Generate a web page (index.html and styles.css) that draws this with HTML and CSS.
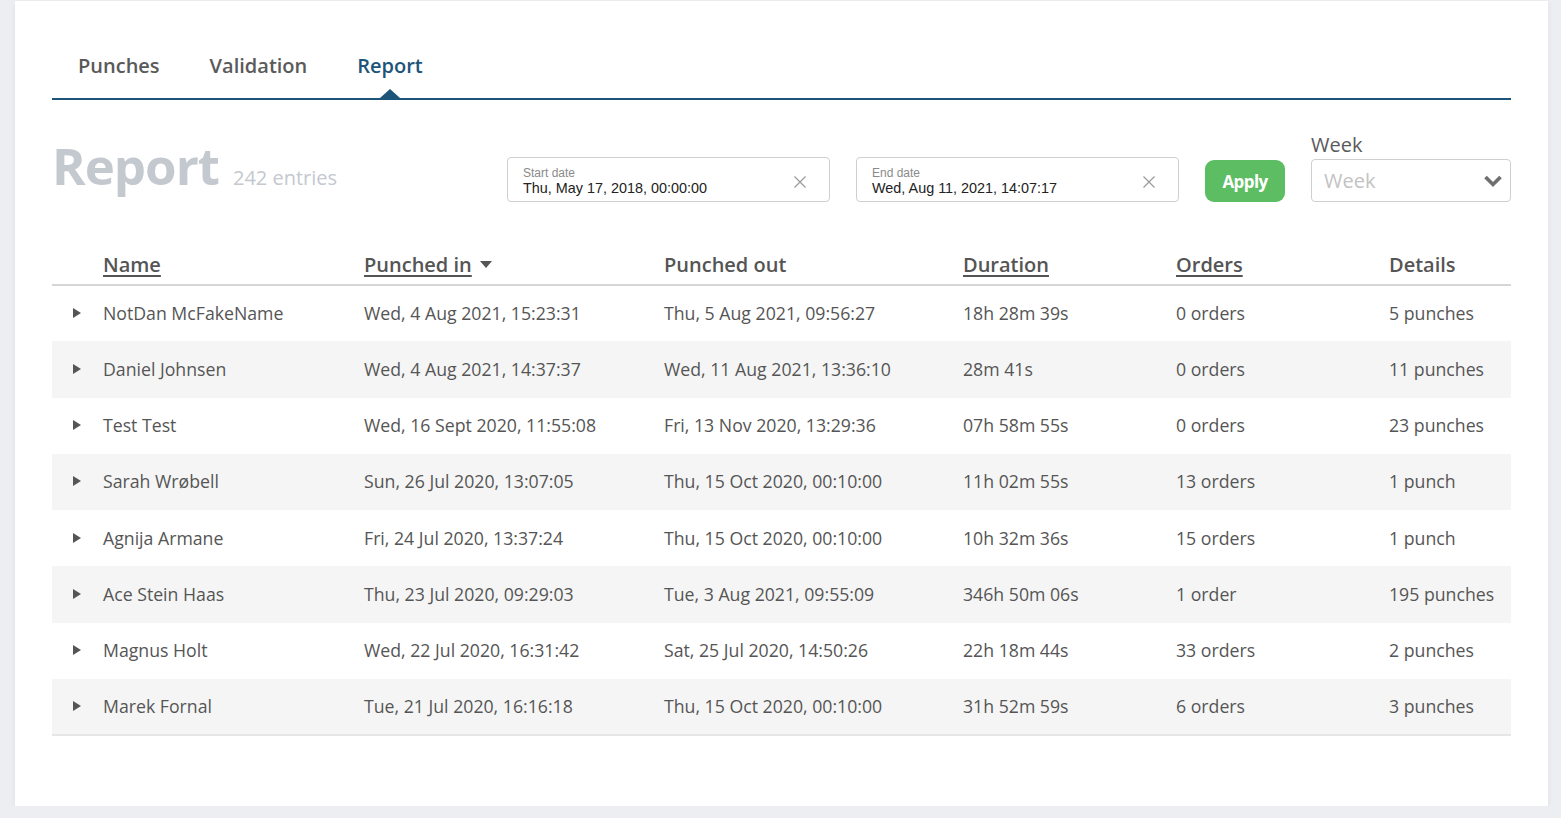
FILE: index.html
```html
<!DOCTYPE html>
<html lang="en">
<head>
<meta charset="utf-8">
<title>Report</title>
<link rel="stylesheet" href="styles.css">
</head>
<body>
<div class="card">
  <nav class="tabs">
    <a class="tab">Punches</a>
    <a class="tab">Validation</a>
    <a class="tab active">Report</a>
  </nav>

  <div class="toolbar">
    <div class="title">
      <h1>Report</h1>
      <span class="count">242 entries</span>
    </div>
    <div class="controls">
      <div class="date-input">
        <div class="date-text">
          <span class="date-label">Start date</span>
          <span class="date-value">Thu, May 17, 2018, 00:00:00</span>
        </div>
        <svg class="clear" width="14" height="14" viewBox="0 0 14 14"><path d="M1.5 1.5L12.5 12.5M12.5 1.5L1.5 12.5" stroke="#9a9a9a" stroke-width="1.2" fill="none"/></svg>
      </div>
      <div class="date-input">
        <div class="date-text">
          <span class="date-label">End date</span>
          <span class="date-value">Wed, Aug 11, 2021, 14:07:17</span>
        </div>
        <svg class="clear" width="14" height="14" viewBox="0 0 14 14"><path d="M1.5 1.5L12.5 12.5M12.5 1.5L1.5 12.5" stroke="#9a9a9a" stroke-width="1.2" fill="none"/></svg>
      </div>
      <button class="apply">Apply</button>
      <div class="week">
        <label class="week-label">Week</label>
        <div class="select">
          <span class="placeholder">Week</span>
          <svg width="20" height="14" viewBox="0 0 20 14"><path d="M2.5 3L10 10.5L17.5 3" stroke="#6f6f6f" stroke-width="3.6" fill="none"/></svg>
        </div>
      </div>
    </div>
  </div>

  <table class="report">
    <colgroup>
      <col class="c-arrow"><col class="c-name"><col class="c-in"><col class="c-out"><col class="c-dur"><col class="c-ord"><col class="c-det">
    </colgroup>
    <thead>
      <tr>
        <th></th>
        <th><span class="sortable">Name</span></th>
        <th><span class="sortable">Punched in</span><span class="sort-caret"></span></th>
        <th>Punched out</th>
        <th><span class="sortable">Duration</span></th>
        <th><span class="sortable">Orders</span></th>
        <th>Details</th>
      </tr>
    </thead>
    <tbody>
      <tr><td><span class="row-caret"></span></td><td>NotDan McFakeName</td><td>Wed, 4 Aug 2021, 15:23:31</td><td>Thu, 5 Aug 2021, 09:56:27</td><td>18h 28m 39s</td><td>0 orders</td><td>5 punches</td></tr>
      <tr><td><span class="row-caret"></span></td><td>Daniel Johnsen</td><td>Wed, 4 Aug 2021, 14:37:37</td><td>Wed, 11 Aug 2021, 13:36:10</td><td>28m 41s</td><td>0 orders</td><td>11 punches</td></tr>
      <tr><td><span class="row-caret"></span></td><td>Test Test</td><td>Wed, 16 Sept 2020, 11:55:08</td><td>Fri, 13 Nov 2020, 13:29:36</td><td>07h 58m 55s</td><td>0 orders</td><td>23 punches</td></tr>
      <tr><td><span class="row-caret"></span></td><td>Sarah Wrøbell</td><td>Sun, 26 Jul 2020, 13:07:05</td><td>Thu, 15 Oct 2020, 00:10:00</td><td>11h 02m 55s</td><td>13 orders</td><td>1 punch</td></tr>
      <tr><td><span class="row-caret"></span></td><td>Agnija Armane</td><td>Fri, 24 Jul 2020, 13:37:24</td><td>Thu, 15 Oct 2020, 00:10:00</td><td>10h 32m 36s</td><td>15 orders</td><td>1 punch</td></tr>
      <tr><td><span class="row-caret"></span></td><td>Ace Stein Haas</td><td>Thu, 23 Jul 2020, 09:29:03</td><td>Tue, 3 Aug 2021, 09:55:09</td><td>346h 50m 06s</td><td>1 order</td><td>195 punches</td></tr>
      <tr><td><span class="row-caret"></span></td><td>Magnus Holt</td><td>Wed, 22 Jul 2020, 16:31:42</td><td>Sat, 25 Jul 2020, 14:50:26</td><td>22h 18m 44s</td><td>33 orders</td><td>2 punches</td></tr>
      <tr><td><span class="row-caret"></span></td><td>Marek Fornal</td><td>Tue, 21 Jul 2020, 16:16:18</td><td>Thu, 15 Oct 2020, 00:10:00</td><td>31h 52m 59s</td><td>6 orders</td><td>3 punches</td></tr>
    </tbody>
  </table>
</div>
</body>
</html>
```

FILE: styles.css
```css
* { box-sizing: border-box; }

html, body {
  margin: 0;
  padding: 0;
  background: #eceef2;
  font-family: "Open Sans", "Noto Sans", sans-serif;
  color: #555;
}

.card {
  width: 1533px;
  height: 805px;
  margin: 1px 0 0 15px;
  background: #fff;
  padding: 0 37px;
  box-shadow: 0 2px 6px rgba(0, 0, 0, 0.06);
}

/* Tabs */
.tabs {
  display: flex;
  padding-top: 51px;
  padding-left: 1px;
  border-bottom: 2px solid #1d5479;
}

.tab {
  position: relative;
  padding: 0 25px 18px;
  font-size: 20px;
  font-weight: 600;
  line-height: 28px;
  color: #5a5a5a;
}

.tab.active {
  color: #1d5479;
}

.tab.active::after {
  content: "";
  position: absolute;
  left: 50%;
  bottom: 0;
  margin-left: -10px;
  border-left: 10px solid transparent;
  border-right: 10px solid transparent;
  border-bottom: 9px solid #1d5479;
}

/* Toolbar */
.toolbar {
  display: flex;
  align-items: flex-end;
  justify-content: space-between;
  margin-top: 33px;
}

.title {
  display: flex;
  align-items: baseline;
  gap: 14px;
  margin-bottom: 11px;
}

.title h1 {
  margin: 0;
  font-size: 51px;
  letter-spacing: -1px;
  line-height: 1;
  font-weight: 700;
  color: #c4c8cf;
}

.count {
  font-size: 20px;
  color: #c4c8cf;
}

.controls {
  display: flex;
  align-items: flex-end;
  gap: 26px;
}

.date-input {
  width: 323px;
  height: 45px;
  border: 1px solid #cfcfcf;
  border-radius: 4px;
  display: flex;
  align-items: center;
  justify-content: space-between;
  padding: 0 22px 0 15px;
  font-family: "Liberation Sans", Arial, sans-serif;
}

.date-text {
  display: flex;
  flex-direction: column;
  padding-top: 3px;
}

.date-label {
  font-size: 12px;
  line-height: 13px;
  color: #8a8a8a;
}

.date-value {
  font-size: 14.4px;
  line-height: 16px;
  color: #222;
}

.clear {
  display: block;
  margin-top: 4px;
}

.apply {
  width: 80px;
  height: 42px;
  border: none;
  border-radius: 9px;
  background: #5cbd62;
  color: #fff;
  font-family: "Open Sans", sans-serif;
  font-weight: 700;
  font-size: 17px;
  letter-spacing: -0.6px;
  padding: 0;
}

.week {
  display: flex;
  flex-direction: column;
}

.week-label {
  font-size: 20px;
  line-height: 24px;
  margin-bottom: 2px;
  color: #5a5a5a;
}

.select {
  width: 200px;
  height: 43px;
  border: 1px solid #cfcfcf;
  border-radius: 4px;
  display: flex;
  align-items: center;
  justify-content: space-between;
  padding: 0 7px 0 12px;
}

.placeholder {
  font-size: 20px;
  color: #c3c3c3;
}

/* Table */
.report {
  width: 100%;
  margin-top: 41px;
  border-collapse: collapse;
  table-layout: fixed;
  border-bottom: 2px solid #e6e6e6;
}

.c-arrow { width: 51px; }
.c-name { width: 261px; }
.c-in { width: 300px; }
.c-out { width: 299px; }
.c-dur { width: 213px; }
.c-ord { width: 213px; }
.c-det { width: 122px; }

.report th {
  text-align: left;
  font-size: 20px;
  font-weight: 600;
  line-height: 28px;
  padding: 8px 0 5px;
  color: #555;
  border-bottom: 2px solid #d6d6d6;
  white-space: nowrap;
}

.sortable {
  text-decoration: underline;
  text-decoration-thickness: 2px;
  text-underline-offset: 3px;
}

.sort-caret {
  display: inline-block;
  margin-left: 8px;
  vertical-align: middle;
  border-left: 6.5px solid transparent;
  border-right: 6.5px solid transparent;
  border-top: 7px solid #555;
  position: relative;
  top: -2px;
}

.report td {
  height: 56.25px;
  padding: 0 0 1px;
  font-size: 17.7px;
  color: #555;
  white-space: nowrap;
  vertical-align: middle;
}

.report tbody tr:nth-child(even) td {
  background: #f5f5f5;
}

.report tbody tr:last-child td {
  border-bottom: 1px solid #fff;
}

.row-caret {
  display: block;
  margin-left: 21px;
  width: 0;
  height: 0;
  border-top: 5.5px solid transparent;
  border-bottom: 5.5px solid transparent;
  border-left: 8px solid #555;
}
```
